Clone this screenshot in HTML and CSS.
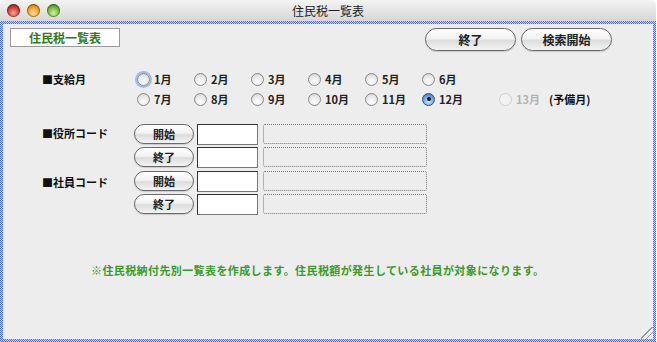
FILE: index.html
```html
<!DOCTYPE html>
<html lang="ja">
<head>
  <meta charset="UTF-8" />
  <title>住民税一覧表</title>
  <link rel="stylesheet" href="styles.css">
</head>
<body>
  <div class="window">
    <div class="titlebar">
      <div class="lights">
        <span class="light red"></span>
        <span class="light yellow"></span>
        <span class="light green"></span>
      </div>
      <div class="title">住民税一覧表</div>
    </div>
    <div class="frame">
      <div class="content">
        <div class="top">
          <div class="tag">住民税一覧表</div>
          <div class="actions">
            <button class="pill wide">終了</button>
            <button class="pill wide">検索開始</button>
          </div>
        </div>

        <div class="section months">
          <div class="label">■支給月</div>
          <div class="radios">
            <div class="radio-row">
              <label class="radio focus"><span class="dot"></span>1月</label>
              <label class="radio"><span class="dot"></span>2月</label>
              <label class="radio"><span class="dot"></span>3月</label>
              <label class="radio"><span class="dot"></span>4月</label>
              <label class="radio"><span class="dot"></span>5月</label>
              <label class="radio"><span class="dot"></span>6月</label>
            </div>
            <div class="radio-row">
              <label class="radio"><span class="dot"></span>7月</label>
              <label class="radio"><span class="dot"></span>8月</label>
              <label class="radio"><span class="dot"></span>9月</label>
              <label class="radio"><span class="dot"></span>10月</label>
              <label class="radio"><span class="dot"></span>11月</label>
              <label class="radio checked"><span class="dot"></span>12月</label>
              <label class="radio disabled"><span class="dot"></span>13月</label>
              <span class="note">(予備月)</span>
            </div>
          </div>
        </div>

        <div class="section codes">
          <div class="label">■役所コード</div>
          <div class="code-rows">
            <div class="code-row">
              <button class="pill">開始</button>
              <div class="field"></div>
              <div class="name"></div>
            </div>
            <div class="code-row">
              <button class="pill">終了</button>
              <div class="field"></div>
              <div class="name"></div>
            </div>
          </div>
        </div>

        <div class="section codes second">
          <div class="label">■社員コード</div>
          <div class="code-rows">
            <div class="code-row">
              <button class="pill">開始</button>
              <div class="field"></div>
              <div class="name"></div>
            </div>
            <div class="code-row">
              <button class="pill">終了</button>
              <div class="field"></div>
              <div class="name"></div>
            </div>
          </div>
        </div>

        <p class="message">※住民税納付先別一覧表を作成します。住民税額が発生している社員が対象になります。</p>

        <div class="grip"></div>
      </div>
    </div>
  </div>
</body>
</html>
```

FILE: styles.css
```css
body {
  margin: 0;
  background: #ffffff;
  font-family: "Noto Sans CJK JP", "Noto Sans", sans-serif;
  font-size: 11px;
  color: #111;
}
.window {
  width: 656px;
  height: 342px;
  display: flex;
  flex-direction: column;
}
.titlebar {
  height: 21px;
  position: relative;
  background: linear-gradient(#f4f4f4, #d6d6d6);
  border-radius: 5px 5px 0 0;
  display: flex;
  align-items: center;
  justify-content: center;
}
.lights {
  position: absolute;
  left: 7px;
  top: 4px;
  display: flex;
  gap: 7px;
}
.light {
  width: 13px;
  height: 13px;
  border-radius: 50%;
  box-shadow: inset 0 0 0 1px rgba(0,0,0,0.35);
}
.light.red {
  background: radial-gradient(circle at 50% 70%, #f3a39a 0, #d2352c 55%, #8a1a14 100%);
}
.light.yellow {
  background: radial-gradient(circle at 50% 70%, #fde0a0 0, #ef9a1d 55%, #a05a0a 100%);
}
.light.green {
  background: radial-gradient(circle at 50% 70%, #d3f0a8 0, #6cb52e 55%, #356b12 100%);
}
.title {
  font-size: 12px;
  color: #222;
}
.frame {
  flex: 1;
  padding: 3px;
  background: repeating-conic-gradient(#4d6fe2 0 25%, #c9d4f7 0 50%) 0 0 / 2px 2px;
}
.content {
  height: 100%;
  box-sizing: border-box;
  background: #ededed;
  position: relative;
  padding: 4px 41px 0 7px;
}
.top {
  display: flex;
  justify-content: space-between;
  align-items: flex-start;
}
.tag {
  width: 108px;
  height: 17px;
  background: #fff;
  border: 1px solid #9a9a9a;
  color: #2f7a1c;
  font-weight: bold;
  font-size: 12px;
  line-height: 17px;
  text-align: center;
}
.actions {
  display: flex;
  gap: 5px;
}
.pill {
  font-family: inherit;
  font-size: 11px;
  font-weight: bold;
  color: #222;
  width: 60px;
  height: 20px;
  padding: 0;
  border: 1px solid #6a6a6a;
  border-radius: 10px;
  background: linear-gradient(#ffffff 0%, #f2f2f2 45%, #dcdcdc 55%, #f4f4f4 100%);
  box-shadow: 0 1px 1px rgba(0,0,0,0.15);
}
.pill.wide {
  width: 91px;
  height: 23px;
  border-radius: 12px;
  font-size: 12px;
}
.section {
  display: flex;
  padding-left: 32px;
}
.label {
  width: 92px;
  font-weight: bold;
  font-size: 11px;
}
.months {
  margin-top: 18px;
}
.months .label {
  line-height: 20px;
}
.radio-row {
  display: flex;
  height: 20px;
  align-items: center;
}
.radio {
  width: 57px;
  display: flex;
  align-items: center;
  gap: 4px;
  font-weight: bold;
  font-size: 11px;
  color: #222;
}
.dot {
  width: 11px;
  height: 11px;
  margin-left: 3px;
  border-radius: 50%;
  border: 1px solid #8a8a8a;
  background: radial-gradient(circle at 50% 70%, #ffffff 0, #e6e6e6 60%, #c4c4c4 100%);
  display: flex;
  align-items: center;
  justify-content: center;
}
.radio.focus .dot {
  box-shadow: 0 0 0 2px #9bbde6;
}
.radio.checked .dot {
  border-color: #2d4f8a;
  background: radial-gradient(circle at 50% 70%, #cfe6ff 0, #6fa7ea 55%, #2a63b8 100%);
}
.radio.checked .dot::after {
  content: "";
  width: 4px;
  height: 4px;
  border-radius: 50%;
  background: #111;
}
.radio.disabled {
  color: #b3b3b3;
  margin-left: 20px;
}
.radio.disabled .dot {
  border-color: #cfcfcf;
  background: #f2f2f2;
}
.note {
  font-weight: bold;
  font-size: 11px;
  margin-left: -4px;
}
.codes {
  margin-top: 15px;
}
.codes.second {
  margin-top: 4px;
}
.codes .label {
  line-height: 18px;
}
.codes.second .label {
  padding-top: 2px;
}
.code-rows {
  display: flex;
  flex-direction: column;
  gap: 3px;
}
.code-row {
  display: flex;
  align-items: center;
  gap: 3px;
  height: 20px;
}
.field {
  width: 59px;
  height: 19px;
  background: #fff;
  border: 1px solid #333;
  border-right-color: #777;
  border-bottom-color: #777;
}
.name {
  width: 162px;
  height: 18px;
  margin-left: 2px;
  border: 1px dotted #777;
  border-radius: 2px;
}
.message {
  margin: 48px 0 0 81px;
  color: #3b9a2a;
  font-weight: bold;
  font-size: 11px;
  letter-spacing: 0.4px;
}
.grip {
  position: absolute;
  right: 0;
  bottom: 0;
  width: 12px;
  height: 12px;
  background: linear-gradient(135deg, transparent 45%, #999 45%, #999 52%, transparent 52%, transparent 68%, #999 68%, #999 75%, transparent 75%);
}
```
